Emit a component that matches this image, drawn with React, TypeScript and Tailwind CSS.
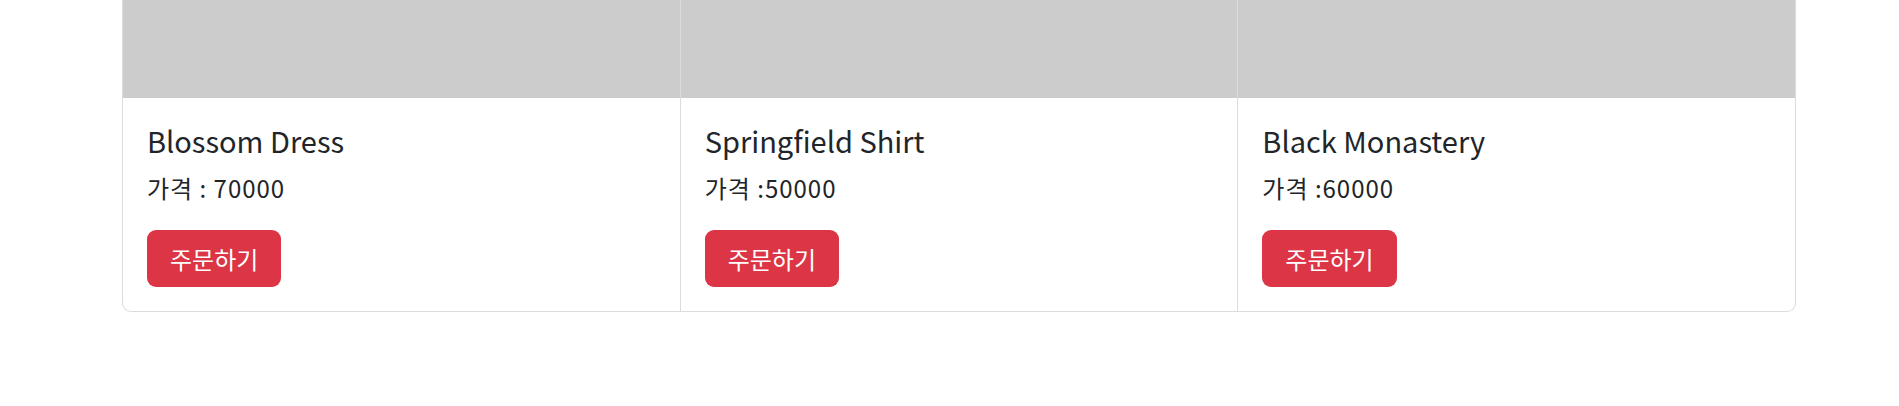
const products = [
  { name: "Blossom Dress", price: "가격 : 70000" },
  { name: "Springfield Shirt", price: "가격 :50000" },
  { name: "Black Monastery", price: "가격 :60000" },
];

function ProductCard({ name, price, first }: { name: string; price: string; first: boolean }) {
  return (
    <div
      className={
        "flex flex-1 flex-col border-[#dcdcdc] border-b border-r " +
        (first ? "border-l rounded-bl-[9px]" : "") +
        (name === "Black Monastery" ? " rounded-br-[9px]" : "")
      }
    >
      <div className="h-[98px] bg-[#cccccc]"></div>
      <div className="p-6">
        <h5 className="mb-3 text-[29px] leading-[36px] text-[#212529]">{name}</h5>
        <p className="mb-6 text-[24px] leading-[36px] tracking-[1px] text-[#212529]">{price}</p>
        <button className="h-[57px] rounded-[9px] bg-[#dc3545] px-[23px] text-[24px] text-white">
          주문하기
        </button>
      </div>
    </div>
  );
}

export default function App() {
  return (
    <div
      className="h-[406px] w-full bg-white"
      style={{ fontFamily: '"Noto Sans CJK KR", "Noto Sans", sans-serif' }}
    >
      <div className="ml-[122px] flex w-[1674px]">
        {products.map((p, i) => (
          <ProductCard key={p.name} name={p.name} price={p.price} first={i === 0} />
        ))}
      </div>
    </div>
  );
}
